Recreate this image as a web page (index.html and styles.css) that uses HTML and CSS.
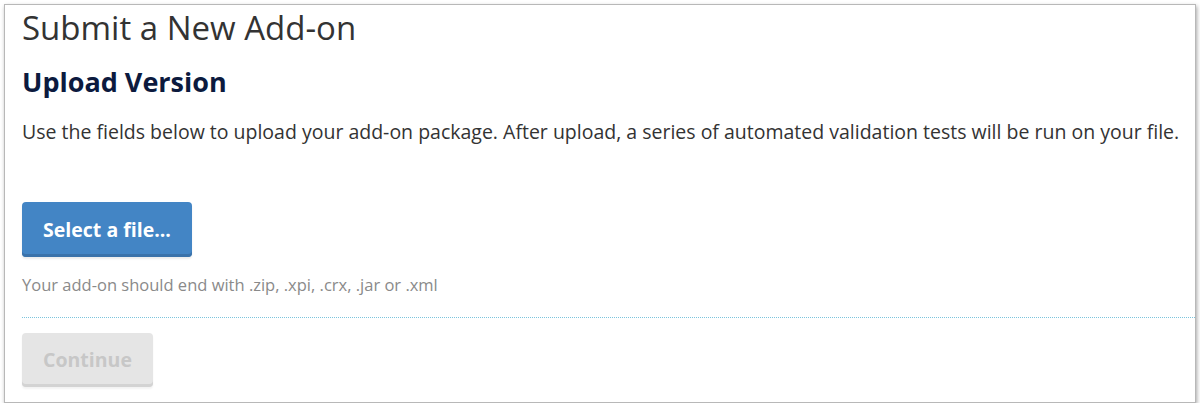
FILE: index.html
```html
<!DOCTYPE html>
<html lang="en">
<head>
<meta charset="utf-8">
<title>Submit a New Add-on</title>
<link rel="stylesheet" href="styles.css">
</head>
<body>
<div class="frame">
  <h1 class="title">Submit a New Add-on</h1>
  <h2 class="subtitle">Upload Version</h2>
  <p class="intro">Use the fields below to upload your add-on package. After upload, a series of automated validation tests will be run on your file.</p>
  <div class="upload">
    <button class="btn btn-primary" type="button">Select a file...</button>
    <p class="hint">Your add-on should end with .zip, .xpi, .crx, .jar or .xml</p>
  </div>
  <div class="actions">
    <button class="btn btn-disabled" type="button" disabled>Continue</button>
  </div>
</div>
</body>
</html>
```

FILE: styles.css
```css
html, body {
  margin: 0;
  padding: 0;
  background: #ffffff;
}
body {
  font-family: "Open Sans", "Liberation Sans", sans-serif;
  color: #333333;
  padding: 4px 0 0 4px;
}
.frame {
  box-sizing: border-box;
  width: 1192px;
  height: 399px;
  border: 1px solid #b8b8b8;
  box-shadow: 1px 2px 4px rgba(0,0,0,0.35);
  padding: 0 0 0 17px;
  background: #fff;
}
.title {
  font-size: 33px;
  font-weight: 400;
  color: #333333;
  margin: 0;
  line-height: 45px;
  white-space: nowrap;
}
.subtitle {
  font-size: 27px;
  font-weight: 700;
  color: #0c1a3e;
  margin: 16px 0 0 0;
  line-height: 32px;
  white-space: nowrap;
}
.intro {
  font-size: 19.5px;
  line-height: 26px;
  margin: 21px 0 0 0;
  color: #333333;
  white-space: nowrap;
}
.upload {
  margin-top: 57px;
}
.btn {
  display: block;
  font-family: "Open Sans", "Liberation Sans", sans-serif;
  font-weight: 700;
  font-size: 19.5px;
  border: none;
  border-radius: 4px;
  padding: 0;
  cursor: pointer;
}
.btn-primary {
  width: 170px;
  height: 55px;
  background: #4385c5;
  color: #ffffff;
  box-shadow: inset 0 -3px 0 #3a72aa, 0 2px 2px rgba(0,0,0,0.08);
}
.hint {
  font-size: 16.5px;
  color: #8a8a8a;
  margin: 16.6px 0 0 0;
  line-height: 22px;
  white-space: nowrap;
}
.actions {
  margin-top: 21px;
  border-top: 1px dotted #7cc4dd;
  padding-top: 15px;
}
.btn-disabled {
  width: 131px;
  height: 54px;
  background: #e5e5e5;
  color: #c7c7c7;
  cursor: default;
  box-shadow: inset 0 -3px 0 #d3d3d3, 0 2px 2px rgba(0,0,0,0.05);
}
```
